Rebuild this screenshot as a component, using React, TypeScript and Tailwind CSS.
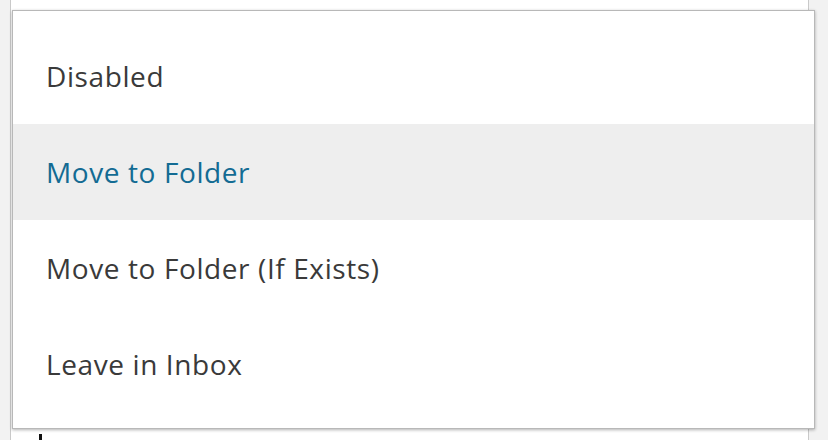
import { useState } from 'react';

const options = ['Disabled', 'Move to Folder', 'Move to Folder (If Exists)', 'Leave in Inbox'];

export default function App() {
  const [active, setActive] = useState(1);

  return (
    <div className="relative w-[828px] h-[440px] flex bg-[#f2f2f2] overflow-hidden" style={{ fontFamily: '"Open Sans", "Liberation Sans", sans-serif' }}>
      <div className="w-[10px] shrink-0" />
      <div className="w-[799px] shrink-0 bg-white border-x border-[#c9c9c9] relative">
        <div className="absolute left-[28px] top-[434px] w-[3px] h-[8px] bg-[#111]" />
      </div>

      <div className="absolute left-[12px] top-[10px] w-[803px] h-[419px] bg-white border border-[#b8b8b8] shadow-[0_1px_3px_rgba(0,0,0,0.3)] py-[17px]">
        {options.map((opt, i) => (
          <div
            key={opt}
            onMouseEnter={() => setActive(i)}
            className={`h-[96px] flex items-center pl-[33px] text-[28px] tracking-[0.6px] cursor-default ${
              i === active ? 'bg-[#eeeeee] text-[#136b93]' : 'text-[#3a3a3a]'
            }`}
          >
            {opt}
          </div>
        ))}
      </div>
    </div>
  );
}
